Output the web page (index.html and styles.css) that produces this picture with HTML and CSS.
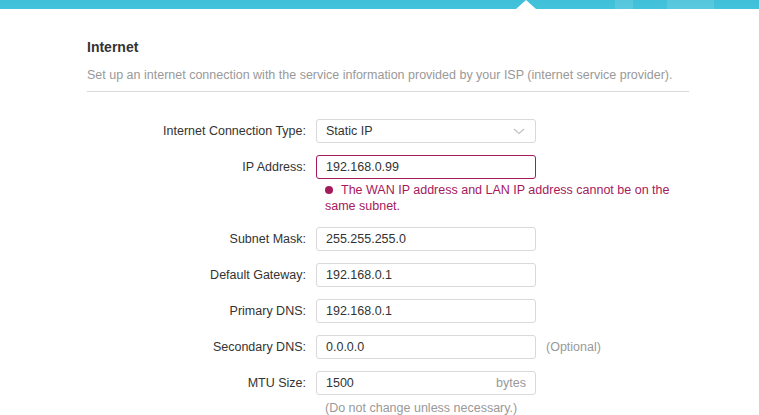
FILE: index.html
```html
<!DOCTYPE html>
<html>
<head>
<meta charset="utf-8">
<link rel="stylesheet" href="styles.css">
</head>
<body>
<div class="topbar">
  <span class="tab-hl tab-hl-1"></span>
  <span class="tab-hl tab-hl-2"></span>
  <span class="notch"></span>
</div>
<div class="page">
  <h2 class="title">Internet</h2>
  <p class="desc">Set up an internet connection with the service information provided by your ISP (internet service provider).</p>
  <div class="form">
    <div class="row">
      <label class="label">Internet Connection Type:</label>
      <div class="field select">
        <span class="value">Static IP</span>
        <svg class="chev" width="12" height="7" viewBox="0 0 12 7"><path d="M1 1 L6 5.5 L11 1" fill="none" stroke="#c4c4c4" stroke-width="1.3"/></svg>
      </div>
    </div>
    <div class="row">
      <label class="label">IP Address:</label>
      <div class="field error-field"><span class="value">192.168.0.99</span></div>
    </div>
    <div class="error-row">
      <div class="error"><span class="dot"></span>The WAN IP address and LAN IP address cannot be on the same subnet.</div>
    </div>
    <div class="row">
      <label class="label">Subnet Mask:</label>
      <div class="field"><span class="value">255.255.255.0</span></div>
    </div>
    <div class="row">
      <label class="label">Default Gateway:</label>
      <div class="field"><span class="value">192.168.0.1</span></div>
    </div>
    <div class="row">
      <label class="label">Primary DNS:</label>
      <div class="field"><span class="value">192.168.0.1</span></div>
    </div>
    <div class="row">
      <label class="label">Secondary DNS:</label>
      <div class="field"><span class="value">0.0.0.0</span></div>
      <span class="hint">(Optional)</span>
    </div>
    <div class="row">
      <label class="label">MTU Size:</label>
      <div class="field"><span class="value">1500</span><span class="unit">bytes</span></div>
    </div>
    <div class="note-row">
      <span class="note">(Do not change unless necessary.)</span>
    </div>
  </div>
</div>
</body>
</html>
```
FILE: styles.css
```css
* { box-sizing: border-box; }
html, body { margin: 0; padding: 0; background: #fff; }
body {
  font-family: "Liberation Sans", Arial, sans-serif;
  font-size: 12.5px;
  color: #333;
  overflow: hidden;
}
.topbar {
  position: relative;
  height: 9px;
  background: linear-gradient(#3fbfd8, #43c3dc);
}
.tab-hl {
  position: absolute;
  top: 0;
  height: 9px;
  background: rgba(255,255,255,0.12);
}
.tab-hl-1 { left: 615px; width: 18px; }
.tab-hl-2 { left: 667px; width: 47px; }
.notch {
  position: absolute;
  left: 516px;
  top: 0;
  width: 0;
  height: 0;
  border-left: 10px solid transparent;
  border-right: 10px solid transparent;
  border-bottom: 9px solid #fff;
}
.page {
  padding: 0 70px 0 87px;
}
.title {
  margin: 0;
  padding-top: 30px;
  font-size: 14px;
  font-weight: bold;
  line-height: 16px;
  color: #333;
}
.desc {
  margin: 12px 0 0;
  width: 602px;
  line-height: 16px;
  color: #999;
  padding-bottom: 8px;
  border-bottom: 1px solid #d9d9d9;
}
.form {
  padding-top: 27px;
}
.row {
  display: flex;
  align-items: center;
  height: 24px;
  margin-bottom: 12px;
}
.label {
  width: 229px;
  text-align: right;
  padding-right: 10px;
  color: #333;
}
.field {
  width: 220px;
  height: 24px;
  border: 1px solid #d9d9d9;
  border-radius: 3px;
  display: flex;
  align-items: center;
  justify-content: space-between;
  padding: 0 9px 0 9px;
  color: #333;
}
.error-field { border-color: #a5195d; }
.chev { margin-right: 1px; }
.unit { color: #999; }
.hint {
  margin-left: 10px;
  color: #999;
}
.error-row {
  margin: -9px 0 13px 238px;
}
.error {
  width: 360px;
  line-height: 16px;
  color: #a5195d;
}
.dot {
  display: inline-block;
  width: 8px;
  height: 8px;
  border-radius: 50%;
  background: #a5195d;
  margin: 0 8px 0 0;
}
.note-row {
  margin: -7px 0 0 238px;
  color: #999;
  line-height: 16px;
}
```
